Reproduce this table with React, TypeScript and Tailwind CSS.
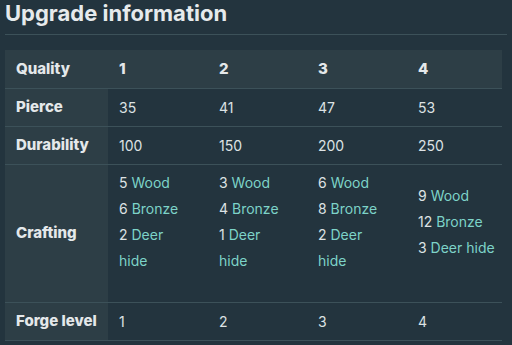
const cols = ['1', '2', '3', '4']

type Mat = [number, string]
const crafting: Mat[][] = [
  [[5, 'Wood'], [6, 'Bronze'], [2, 'Deer hide']],
  [[3, 'Wood'], [4, 'Bronze'], [1, 'Deer hide']],
  [[6, 'Wood'], [8, 'Bronze'], [2, 'Deer hide']],
  [[9, 'Wood'], [12, 'Bronze'], [3, 'Deer hide']],
]

function Label({ children }: { children: React.ReactNode }) {
  return (
    <th className="bg-[#2d3e46] px-[11px] text-left align-middle text-[15px] font-extrabold text-[#e4e8ea] whitespace-nowrap">
      {children}
    </th>
  )
}

function ValueRow({ label, values }: { label: string; values: (string | number)[] }) {
  return (
    <tr className="h-[38px] border-b border-[#3c5159]">
      <Label>{label}</Label>
      {values.map((v, i) => (
        <td key={i} className="px-[11px] align-middle text-[#dde2e4]">{v}</td>
      ))}
    </tr>
  )
}

export default function App() {
  return (
    <div
      className="min-h-[345px] w-[512px] bg-[#23343e] px-[5px]"
      style={{ fontFamily: 'Inter, "Noto Sans", sans-serif' }}
    >
      <h2 className="border-b border-[#3c5159] pb-[7px] text-[22px] font-bold leading-[27px] text-[#e6eaec]">
        Upgrade information
      </h2>
      <table className="mt-[15px] w-[497px] table-fixed border-collapse text-[14px]">
        <colgroup>
          <col className="w-[103px]" />
          <col className="w-[100px]" />
          <col className="w-[99px]" />
          <col className="w-[100px]" />
          <col />
        </colgroup>
        <thead>
          <tr className="h-[38px] border-b border-[#3c5159] bg-[#2d3e46]">
            <Label>Quality</Label>
            {cols.map(c => (
              <th key={c} className="px-[11px] text-left text-[15px] font-extrabold text-[#e4e8ea]">{c}</th>
            ))}
          </tr>
        </thead>
        <tbody>
          <ValueRow label="Pierce" values={[35, 41, 47, 53]} />
          <ValueRow label="Durability" values={[100, 150, 200, 250]} />
          <tr className="h-[138px] border-b border-[#3c5159]">
            <Label>Crafting</Label>
            {crafting.map((mats, i) => (
              <td
                key={i}
                className={
                  i < 3
                    ? 'pl-[11px] pr-[22px] pb-[22px] align-middle leading-[26px] text-[#dde2e4]'
                    : 'pl-[11px] pr-[2px] pb-[22px] align-middle leading-[26px] text-[#dde2e4]'
                }
              >
                {mats.map(([n, name]) => (
                  <div key={name}>
                    {n} <span className="text-[#7dd3c8]">{name}</span>
                  </div>
                ))}
              </td>
            ))}
          </tr>
          <ValueRow label="Forge level" values={[1, 2, 3, 4]} />
        </tbody>
      </table>
    </div>
  )
}
